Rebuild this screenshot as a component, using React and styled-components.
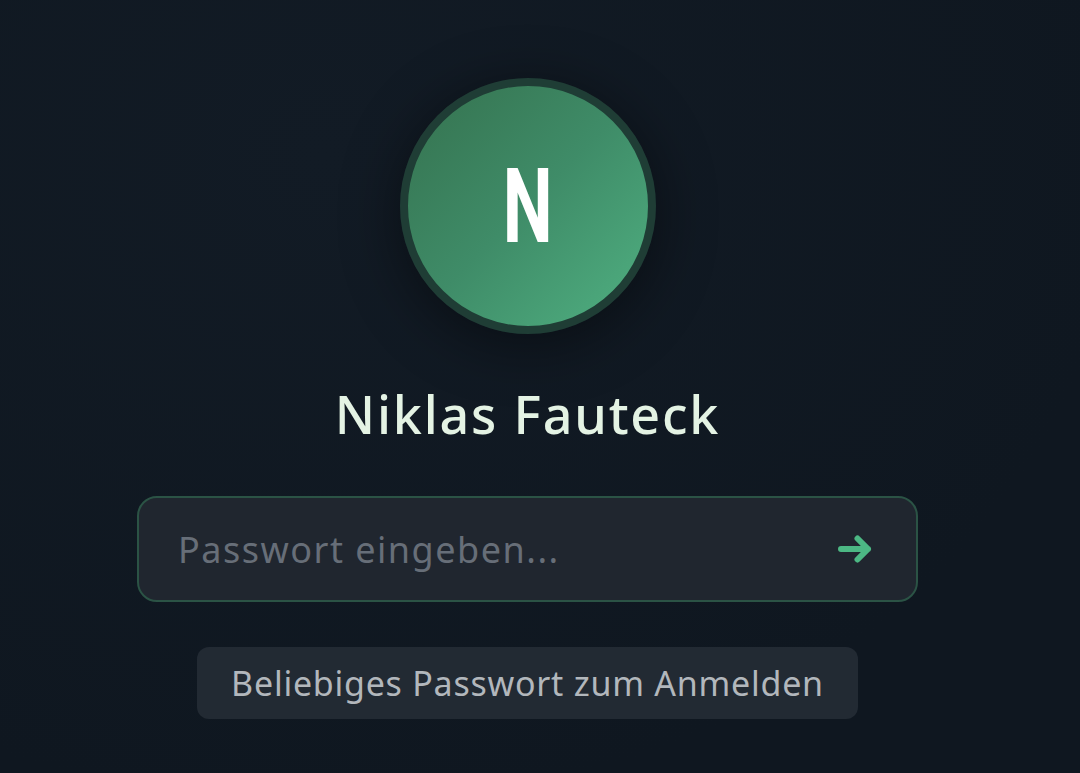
import React from "react";
import styled, { createGlobalStyle } from "styled-components";

const GlobalStyle = createGlobalStyle`
  html, body {
    margin: 0;
    padding: 0;
    background: #101922;
  }
  body {
    font-family: "Noto Sans", "Open Sans", sans-serif;
  }
  * {
    box-sizing: border-box;
  }
`;

const Screen = styled.div`
  min-height: 100vh;
  background: radial-gradient(ellipse at 30% 20%, #121b25 0%, #0f1720 75%);
  display: flex;
  justify-content: center;
  padding: 78px 25px 0 0;
`;

const LoginCard = styled.div`
  display: flex;
  flex-direction: column;
  align-items: center;
  width: 781px;
`;

const Avatar = styled.div`
  width: 256px;
  height: 256px;
  border-radius: 50%;
  border: 8px solid #1f3d35;
  background: linear-gradient(135deg, #35724f 0%, #3f8c68 50%, #50b182 100%);
  box-shadow: 0 10px 60px rgba(0, 0, 0, 0.45);
  display: flex;
  align-items: center;
  justify-content: center;
`;

const Initial = styled.span`
  display: inline-block;
  font-family: Roboto, "Noto Sans", sans-serif;
  font-weight: 700;
  font-size: 104px;
  line-height: 1;
  color: #ffffff;
  transform: scaleX(0.68);
  margin-top: 2px;
`;

const Name = styled.h1`
  margin: 47px 0 0;
  font-size: 52px;
  line-height: 66px;
  font-weight: 500;
  letter-spacing: 1.8px;
  color: #e4f3e4;
`;

const Field = styled.label`
  margin-top: 49px;
  width: 781px;
  height: 106px;
  border: 2px solid #2b5345;
  border-radius: 20px;
  background: #20262f;
  display: flex;
  align-items: center;
  padding: 0 44px 0 37px;
`;

const Input = styled.input`
  flex: 1;
  min-width: 0;
  background: transparent;
  border: none;
  outline: none;
  font-family: inherit;
  font-size: 36px;
  letter-spacing: 1.5px;
  color: #d8dde2;

  &::placeholder {
    color: #676e78;
  }
`;

const Submit = styled.button`
  border: none;
  background: transparent;
  padding: 0;
  display: flex;
  cursor: pointer;
`;

const Hint = styled.div`
  margin-top: 45px;
  height: 72px;
  padding: 0 34px;
  border-radius: 12px;
  background: #222a33;
  display: flex;
  align-items: center;
  font-size: 34px;
  letter-spacing: 0.75px;
  color: #b2b7bc;
`;

const ArrowIcon = () => (
  <svg width="34" height="28" viewBox="0 0 34 28" fill="none">
    <path
      d="M3 14H30M19.5 3.5L30 14L19.5 24.5"
      stroke="#4cb884"
      strokeWidth="6"
      strokeLinecap="round"
      strokeLinejoin="round"
    />
  </svg>
);

export default function App() {
  return (
    <>
      <GlobalStyle />
      <Screen>
        <LoginCard>
          <Avatar>
            <Initial>N</Initial>
          </Avatar>
          <Name>Niklas Fauteck</Name>
          <Field>
            <Input type="password" placeholder="Passwort eingeben..." />
            <Submit type="button" aria-label="Anmelden">
              <ArrowIcon />
            </Submit>
          </Field>
          <Hint>Beliebiges Passwort zum Anmelden</Hint>
        </LoginCard>
      </Screen>
    </>
  );
}
